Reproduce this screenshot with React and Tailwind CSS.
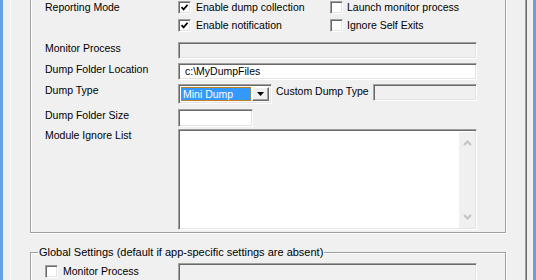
import React from 'react';

const sunken = 'border border-t-[#a0a0a0] border-l-[#a0a0a0] border-r-white border-b-white shadow-[inset_1px_1px_0_#696969,inset_-1px_-1px_0_#e3e3e3]';

function CheckBox({ checked }) {
    return (
        <div className={`w-[13px] h-[13px] shrink-0 bg-white flex items-center justify-center ${sunken}`}>
            {checked && (
                <svg width="9" height="9" viewBox="0 0 9 9">
                    <path d="M1.5 4.2 L3.6 6.4 L7.6 1.8" fill="none" stroke="#000" strokeWidth="1.7" />
                </svg>
            )}
        </div>
    );
}

function TextBox({ className, disabled, children }) {
    return (
        <div className={`${sunken} ${disabled ? 'bg-[#f0f0f0]' : 'bg-white'} flex items-center pl-[6px] ${className}`}>
            {children}
        </div>
    );
}

function Chevron({ down }) {
    return (
        <svg width="9" height="6" viewBox="0 0 9 6">
            <path d={down ? 'M1 1 L4.5 4.5 L8 1' : 'M1 5 L4.5 1.5 L8 5'} fill="none" stroke="#c4c4c4" strokeWidth="2" />
        </svg>
    );
}

export default function App() {
    return (
        <div className="w-[536px] h-[280px] overflow-hidden flex bg-[#f0f0f0] font-['Liberation_Sans',Arial,sans-serif] text-[10.5px] leading-[13px] text-black">
            <div className="w-[3px] shrink-0 bg-[#64a0e4]" />
            <div className="w-[7px] shrink-0" />
            <div className="w-[516px] shrink-0 border-l border-white border-r border-r-[#a0a0a0] shadow-[1px_0_0_#696969] flex flex-col pl-[19px]">
                {/* Per-app settings */}
                <div className="w-[476px] -mt-[12px] pt-[11px] pb-[2px] pl-[14px] pr-[28px] border border-[#a0a0a0] shadow-[inset_1px_1px_0_white,1px_1px_0_white] flex flex-col">
                    <div className="flex items-center h-[14px]">
                        <div className="w-[133px]">Reporting Mode</div>
                        <div className="w-[152px] flex items-center gap-[5px]">
                            <CheckBox checked />
                            <span>Enable dump collection</span>
                        </div>
                        <div className="flex items-center gap-[4px]">
                            <CheckBox />
                            <span>Launch monitor process</span>
                        </div>
                    </div>
                    <div className="flex items-center h-[14px] mt-[4px]">
                        <div className="w-[133px]" />
                        <div className="w-[152px] flex items-center gap-[5px]">
                            <CheckBox checked />
                            <span>Enable notification</span>
                        </div>
                        <div className="flex items-center gap-[4px]">
                            <CheckBox />
                            <span>Ignore Self Exits</span>
                        </div>
                    </div>
                    <div className="flex items-start mt-[10px]">
                        <div className="w-[133px]">Monitor Process</div>
                        <TextBox className="w-[299px] h-[17px]" disabled />
                    </div>
                    <div className="flex items-start mt-[4px]">
                        <div className="w-[133px]">Dump Folder Location</div>
                        <TextBox className="w-[299px] h-[17px]">c:\MyDumpFiles</TextBox>
                    </div>
                    <div className="flex items-start mt-[4px]">
                        <div className="w-[133px]">Dump Type</div>
                        <div className="w-[299px] flex items-start">
                            <div className={`w-[94px] h-[20px] bg-white p-[2px] flex ${sunken}`}>
                                <div className="flex-1 bg-[#3399ff] text-white pl-[2px] flex items-center outline-1 outline-dotted outline-[#c08020] -outline-offset-1">
                                    Mini Dump
                                </div>
                                <div className="w-[17px] ml-[1px] bg-[#f0f0f0] border border-t-white border-l-white border-r-[#696969] border-b-[#696969] shadow-[inset_-1px_-1px_0_#a0a0a0] flex items-center justify-center">
                                    <svg width="7" height="4" viewBox="0 0 7 4">
                                        <path d="M0 0 H7 L3.5 4 Z" fill="#000" />
                                    </svg>
                                </div>
                            </div>
                            <div className="flex-1 pl-[4px] pt-[1px]">Custom Dump Type</div>
                            <TextBox className="w-[104px] h-[17px]" disabled />
                        </div>
                    </div>
                    <div className="flex items-start mt-[5px]">
                        <div className="w-[133px]">Dump Folder Size</div>
                        <TextBox className="w-[75px] h-[18px]" />
                    </div>
                    <div className="flex items-start mt-[2px]">
                        <div className="w-[133px]">Module Ignore List</div>
                        <div className={`w-[299px] h-[101px] bg-white flex justify-end p-[2px] pb-[1px] pr-[1px] ${sunken}`}>
                            <div className="w-[16px] h-full bg-[#f0f0f0] flex flex-col items-center justify-between pt-[8px] pb-[8px]">
                                <Chevron />
                                <Chevron down />
                            </div>
                        </div>
                    </div>
                </div>

                {/* Global settings */}
                <fieldset className="w-[476px] mt-[13px] pt-[4px] pl-[14px] border border-[#a0a0a0] shadow-[inset_1px_1px_0_white,1px_1px_0_white]">
                    <legend className="-ml-[7px] px-[1px] bg-[#f0f0f0] text-[11px] leading-[13px]">
                        Global Settings (default if app-specific settings are absent)
                    </legend>
                    <div className="flex items-start">
                        <div className="w-[133px] flex items-start gap-[5px]">
                            <div className="mt-[2px]">
                                <CheckBox />
                            </div>
                            <span className="mt-[2px]">Monitor Process</span>
                        </div>
                        <TextBox className="w-[299px] h-[20px]" disabled />
                    </div>
                </fieldset>
            </div>
            <div className="w-[7px] shrink-0" />
            <div className="w-[3px] shrink-0 bg-[#64a0e4]" />
        </div>
    );
}
